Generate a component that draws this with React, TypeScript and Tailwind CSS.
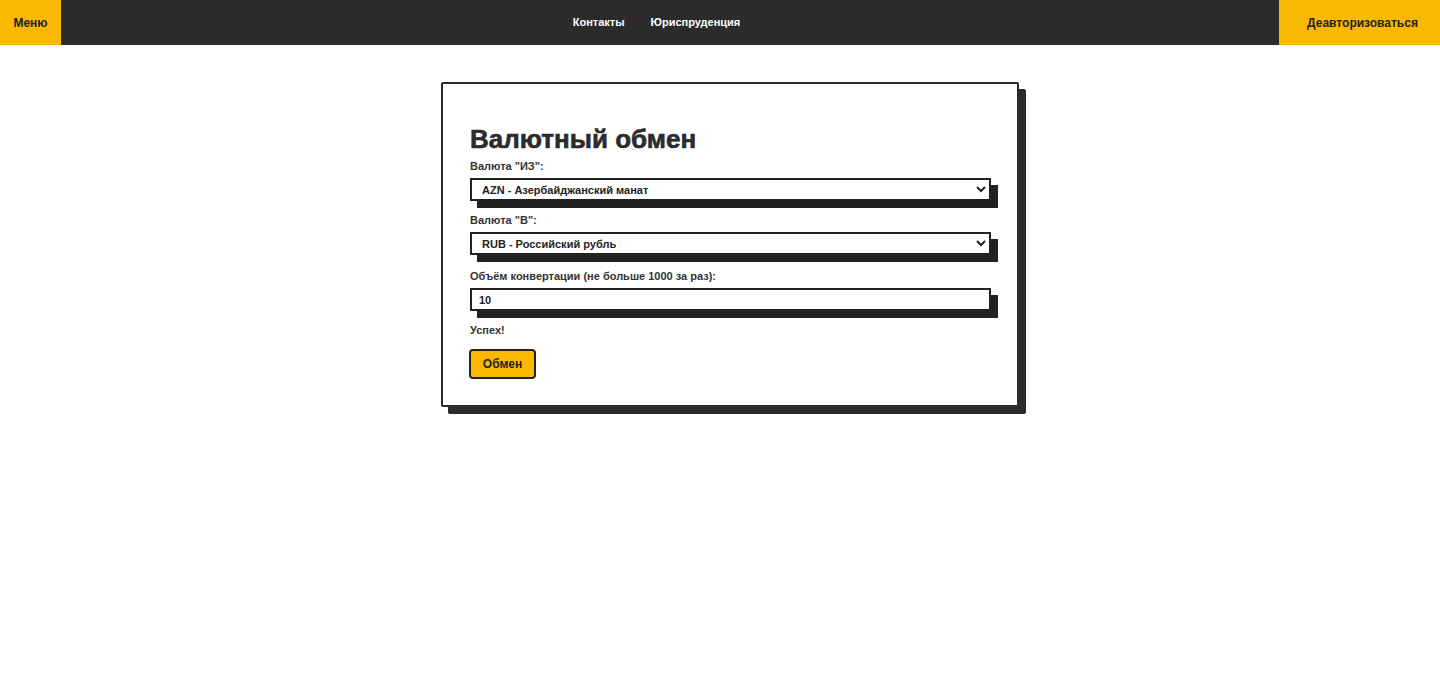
import React, { useState } from 'react';

const font = { fontFamily: '"Liberation Sans", Arial, sans-serif' };

export default function App() {
  const [from, setFrom] = useState('AZN');
  const [to, setTo] = useState('RUB');
  const [amount, setAmount] = useState('10');

  return (
    <div className="min-h-screen bg-white text-[#222]" style={font}>
      {/* Top navigation */}
      <header className="flex h-[45px] items-stretch bg-[#2b2b2b]">
        <button className="w-[61px] bg-[#fbb800] text-[12px] font-bold text-[#222]">Меню</button>
        <nav className="flex flex-1 items-center justify-center gap-[26px] pr-[27px] text-[11px] font-bold text-white">
          <a href="#">Контакты</a>
          <a href="#">Юриспруденция</a>
        </nav>
        <button className="w-[161px] bg-[#fbb800] pl-[6px] text-[12px] font-bold text-[#222]">Деавторизоваться</button>
      </header>

      {/* Exchange card */}
      <main className="flex justify-center pl-5 pt-[37px]">
        <div className="w-[578px] rounded-[2px] border-2 border-[#2b2b2b] bg-white pb-[26px] pl-[27px] pr-[26px] pt-[40px] shadow-[7px_7px_0_#2b2b2b]">
          <h1 className="mb-[5px] text-[26px] font-black leading-[30px] text-[#2b2b2b] [-webkit-text-stroke:0.6px_#2b2b2b]">
            Валютный обмен
          </h1>

          <label className="block text-[11px] font-bold leading-[14px] text-[#333]">Валюта "ИЗ":</label>
          <select
            value={from}
            onChange={(e) => setFrom(e.target.value)}
            className="mb-3 mt-[5px] block h-[23px] w-full rounded-none border-2 border-[#222] bg-white pl-[6px] text-[11px] font-bold text-[#222] shadow-[7px_7px_0_#222] outline-none"
          >
            <option value="AZN">AZN - Азербайджанский манат</option>
            <option value="RUB">RUB - Российский рубль</option>
          </select>

          <label className="block text-[11px] font-bold leading-[14px] text-[#333]">Валюта "В":</label>
          <select
            value={to}
            onChange={(e) => setTo(e.target.value)}
            className="mb-[14px] mt-[5px] block h-[23px] w-full rounded-none border-2 border-[#222] bg-white pl-[6px] text-[11px] font-bold text-[#222] shadow-[7px_7px_0_#222] outline-none"
          >
            <option value="RUB">RUB - Российский рубль</option>
            <option value="AZN">AZN - Азербайджанский манат</option>
          </select>

          <label className="block text-[11px] font-bold leading-[14px] text-[#333]">Объём конвертации (не больше 1000 за раз):</label>
          <input
            value={amount}
            onChange={(e) => setAmount(e.target.value)}
            className="mb-3 mt-[5px] block h-[23px] w-full border-2 border-[#222] bg-white px-[7px] text-[11px] font-bold text-[#222] shadow-[7px_7px_0_#222] outline-none"
          />

          <p className="text-[11px] font-bold leading-[14px] text-[#333]">Успех!</p>

          <button className="mt-3 h-[30px] w-[67px] -translate-x-px rounded-[4px] border-2 border-[#222] bg-[#fbb800] text-[12px] font-bold text-[#222]">
            Обмен
          </button>
        </div>
      </main>
    </div>
  );
}
